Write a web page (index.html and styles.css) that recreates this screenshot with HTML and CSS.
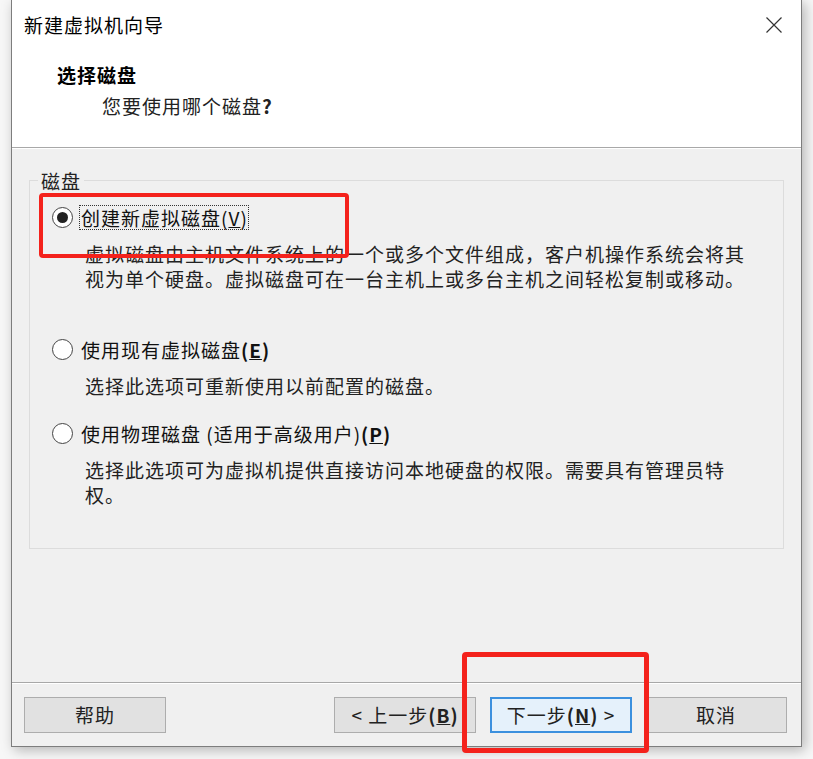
FILE: index.html
```html
<!DOCTYPE html>
<html lang="zh-CN">
<head>
<meta charset="utf-8">
<title>新建虚拟机向导</title>
<link rel="stylesheet" href="styles.css">
</head>
<body>
<div class="window">
  <div class="header">
    <div class="titlebar">
      <span class="title">新建虚拟机向导</span>
      <svg class="close" width="16" height="16" viewBox="0 0 16 16"><path d="M0.5 0.5 L15.5 15.5 M15.5 0.5 L0.5 15.5" stroke="#333" stroke-width="1.2" fill="none"/></svg>
    </div>
    <div class="heading">选择磁盘</div>
    <div class="subheading">您要使用哪个磁盘<b class="q">?</b></div>
  </div>
  <div class="content">
    <fieldset class="group">
      <legend class="group-title">磁盘</legend>
      <div class="option opt1">
        <span class="radio checked"></span>
        <span class="label focused">创建新虚拟磁盘(<u>V</u>)</span>
      </div>
      <p class="desc">虚拟磁盘由主机文件系统上的一个或多个文件组成，客户机操作系统会将其视为单个硬盘。虚拟磁盘可在一台主机上或多台主机之间轻松复制或移动。</p>
      <div class="option opt2">
        <span class="radio"></span>
        <span class="label">使用现有虚拟磁盘<span class="key">(<u>E</u>)</span></span>
      </div>
      <p class="desc">选择此选项可重新使用以前配置的磁盘。</p>
      <div class="option opt3">
        <span class="radio"></span>
        <span class="label">使用物理磁盘 (适用于高级用户)<span class="key">(<u>P</u>)</span></span>
      </div>
      <p class="desc">选择此选项可为虚拟机提供直接访问本地硬盘的权限。需要具有管理员特权。</p>
    </fieldset>
  </div>
  <div class="footer">
    <button class="btn">帮助</button>
    <div class="spacer"></div>
    <button class="btn">&lt; 上一步<span class="key">(<u>B</u>)</span></button>
    <button class="btn primary">下一步<span class="key">(<u>N</u>)</span> &gt;</button>
    <button class="btn">取消</button>
  </div>
</div>
<div class="mark mark1"></div>
<div class="mark mark2"></div>
</body>
</html>
```
FILE: styles.css
```css
html, body {
  margin: 0;
  padding: 0;
}
body {
  width: 813px;
  height: 759px;
  background: #f7f7f7;
  position: relative;
  overflow: hidden;
  font-family: "Noto Sans CJK SC", "Microsoft YaHei", sans-serif;
  font-size: 19px;
  letter-spacing: 1px;
  color: #111;
}
.window {
  margin-left: 11px;
  width: 791px;
  height: 747px;
  box-sizing: border-box;
  border: 1px solid #7d7d7d;
  border-top: none;
  background: #f0f0f0;
  display: flex;
  flex-direction: column;
  box-shadow: 3px 3px 12px rgba(0,0,0,0.28);
}
.header {
  background: #fff;
  height: 147px;
  border-bottom: 1px solid #a8a8a8;
  flex: none;
}
.titlebar {
  display: flex;
  align-items: center;
  justify-content: space-between;
  padding: 12px 19px 0 12px;
  line-height: 25px;
}
.title {
  color: #000;
}
.close {
  display: block;
}
.heading {
  font-weight: bold;
  margin: 25px 0 0 45px;
  line-height: 25px;
  color: #000;
}
.subheading {
  margin: 6px 0 0 90px;
  line-height: 25px;
  color: #222;
}
.q {
  font-weight: 600;
}
.key {
  font-weight: 600;
}
.content {
  flex: 1;
  border-top: 1px solid #fff;
  padding: 19px 17px 0 17px;
}
.group {
  margin: 0;
  border: 1px solid #dcdcdc;
  padding: 12px 0 41px 0;
}
.group-title {
  margin-left: 8px;
  padding: 0 3px;
  line-height: 25px;
  color: #222;
}
.option {
  display: flex;
  align-items: center;
  line-height: 25px;
  padding-left: 22px;
}
.opt2 { margin-top: 46px; }
.opt3 { margin-top: 23px; }
.radio {
  width: 19px;
  height: 19px;
  border: 1px solid #444;
  border-radius: 50%;
  background: #fff;
  box-sizing: content-box;
  display: flex;
  align-items: center;
  justify-content: center;
  flex: none;
}
.radio.checked::after {
  content: "";
  width: 11px;
  height: 11px;
  border-radius: 50%;
  background: #222;
}
.label {
  margin-left: 6px;
  padding: 0 1px 0 2px;
  color: #111;
}
.label.focused {
  outline: 1px dotted #333;
  outline-offset: -1px;
}
.desc {
  margin: 11px 0 0 55px;
  padding-right: 36px;
  line-height: 25px;
  color: #222;
}
.footer {
  flex: none;
  border-top: 1px solid #a8a8a8;
  box-shadow: inset 0 1px 0 #fff;
  display: flex;
  align-items: flex-start;
  padding: 14px 14px 13px 12px;
}
.spacer { flex: 1; }
.btn {
  font: inherit;
  letter-spacing: 1px;
  width: 142px;
  height: 36px;
  box-sizing: border-box;
  border: 1px solid #adadad;
  background: #e1e1e1;
  color: #222;
  padding: 0;
  line-height: 34px;
  border-radius: 0;
}
.btn + .btn { margin-left: 14px; }
.btn.primary {
  border: 2px solid #3c90de;
  background: #e5f1fb;
  line-height: 32px;
}
.btn.primary + .btn { margin-left: 13px; }
.mark {
  position: absolute;
  border: 4px solid #f4221c;
  border-radius: 4px;
  box-sizing: border-box;
}
.mark1 {
  left: 39px;
  top: 193px;
  width: 310px;
  height: 65px;
}
.mark2 {
  left: 462px;
  top: 652px;
  width: 187px;
  height: 101px;
  border-width: 5px;
}
```
